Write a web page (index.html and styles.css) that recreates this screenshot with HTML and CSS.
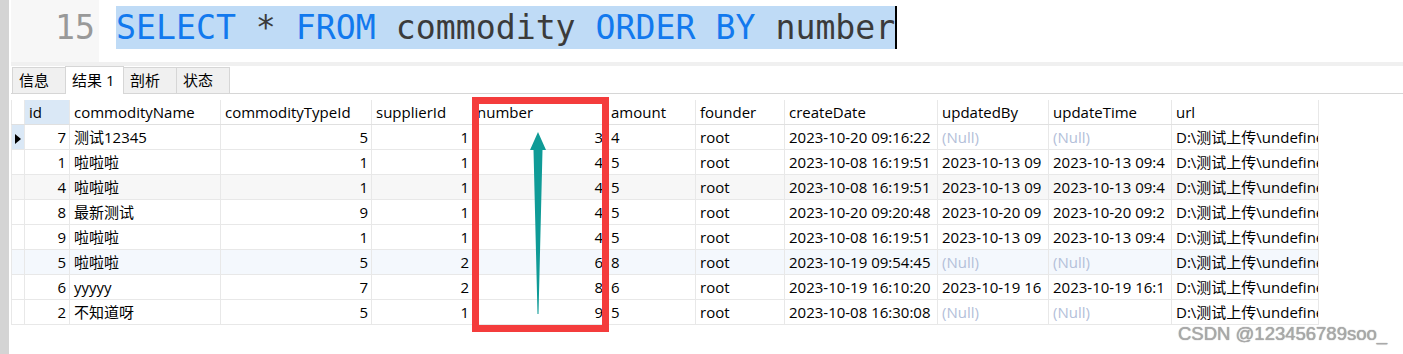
FILE: index.html
```html
<!DOCTYPE html>
<html lang="zh-CN">
<head>
    <meta charset="UTF-8">
    <title>commodity</title>
    <link rel="stylesheet" href="styles.css">
</head>
<body>
    <div class="rail"></div>
    <div class="main">
        <!-- SQL editor -->
        <div class="editor">
            <div class="gutter">15</div>
            <div class="code"><span class="line"><span class="kw">SELECT</span> * <span class="kw">FROM</span> commodity <span class="kw">ORDER BY</span> number</span></div>
        </div>
        <div class="sep"></div>

        <div class="tabs">
            <div class="tab">信息</div>
            <div class="tab active">结果 1</div>
            <div class="tab">剖析</div>
            <div class="tab">状态</div>
        </div>

        <table class="grid">
            <colgroup>
                <col style="width:13px"><col style="width:45px"><col style="width:151px"><col style="width:151px">
                <col style="width:101px"><col style="width:134px"><col style="width:89px"><col style="width:89px">
                <col style="width:153px"><col style="width:111px"><col style="width:123px"><col style="width:147px">
            </colgroup>
            <thead>
                <tr>
                    <th class="ind"></th>
                    <th class="sorted">id</th>
                    <th>commodityName</th>
                    <th>commodityTypeId</th>
                    <th>supplierId</th>
                    <th>number</th>
                    <th>amount</th>
                    <th>founder</th>
                    <th>createDate</th>
                    <th>updatedBy</th>
                    <th>updateTime</th>
                    <th>url</th>
                </tr>
            </thead>
            <tbody id="rows"></tbody>
        </table>

        <div class="watermark">CSDN @123456789soo_</div>
    </div>

    <!-- annotation drawn over the grid -->
    <div class="mark-box"></div>
    <svg class="mark-arrow" width="30" height="190" viewBox="0 0 30 190">
        <polygon points="15,0 23,18 19.5,18 15.5,182 14.5,182 10.5,18 7,18" fill="#0f9b97"/>
    </svg>

    <script>
        // only the part of each value that fits in its column is shown by the grid
        const data = [
            [7, '测试12345', 5, 1, 3, 4, 'root', '2023-10-20 09:16:22', null, null, ''],
            [1, '啦啦啦', 1, 1, 4, 5, 'root', '2023-10-08 16:19:51', '2023-10-13 09', '2023-10-13 09:4', ''],
            [4, '啦啦啦', 1, 1, 4, 5, 'root', '2023-10-08 16:19:51', '2023-10-13 09', '2023-10-13 09:4', 'grey'],
            [8, '最新测试', 9, 1, 4, 5, 'root', '2023-10-20 09:20:48', '2023-10-20 09', '2023-10-20 09:2', ''],
            [9, '啦啦啦', 1, 1, 4, 5, 'root', '2023-10-08 16:19:51', '2023-10-13 09', '2023-10-13 09:4', ''],
            [5, '啦啦啦', 5, 2, 6, 8, 'root', '2023-10-19 09:54:45', null, null, 'blue'],
            [6, 'yyyyy', 7, 2, 8, 6, 'root', '2023-10-19 16:10:20', '2023-10-19 16', '2023-10-19 16:1', ''],
            [2, '不知道呀', 5, 1, 9, 5, 'root', '2023-10-08 16:30:08', null, null, '']
        ];

        const tbody = document.getElementById('rows');
        data.forEach(function (r, i) {
            const tr = document.createElement('tr');
            if (r[10]) tr.classList.add(r[10]);
            const cell = function (v, cls) {
                if (v === null) return '<td class="null">(Null)</td>';
                return '<td' + (cls ? ' class="' + cls + '"' : '') + '>' + v + '</td>';
            };
            tr.innerHTML =
                '<td class="ind' + (i === 0 ? ' current' : '') + '">' + (i === 0 ? '<span class="caret"></span>' : '') + '</td>' +
                cell(r[0], 'num') + cell(r[1]) + cell(r[2], 'num') + cell(r[3], 'num') +
                cell(r[4], 'num') + cell(r[5]) + cell(r[6]) + cell(r[7]) +
                cell(r[8]) + cell(r[9]) + cell('D:\\测试上传\\undefine');
            tbody.appendChild(tr);
        });
    </script>
</body>
</html>
```

FILE: styles.css
```css
body {
    margin: 0;
    width: 1403px;
    height: 354px;
    overflow: hidden;
    background: #fff;
    display: flex;
    font-family: "Open Sans", "Noto Sans CJK SC", sans-serif;
    font-size: 15px;
    color: #000;
}

.rail {
    width: 9px;
    background: #d4d4d4;
    flex: none;
}

.main {
    flex: 1;
    padding-left: 2px;
    position: relative;
}

/* editor */
.editor {
    display: flex;
    height: 62px;
}

.gutter {
    width: 84px;
    padding-right: 4px;
    background: #f7f7f7;
    text-align: right;
    font-family: "DejaVu Sans Mono", monospace;
    font-size: 33.2px;
    line-height: 43px;
    padding-top: 6px;
    color: #999;
}

.code {
    padding-left: 17px;
    padding-top: 6px;
    font-family: "DejaVu Sans Mono", monospace;
    font-size: 33.2px;
    color: #3b3b3b;
}

.line {
    display: inline-block;
    height: 43px;
    line-height: 43px;
    background: #bfdbf6;
    border-right: 2px solid #000;
    white-space: pre;
}

.kw {
    color: #1279ee;
}

.sep {
    height: 4px;
    background: #f0f0f0;
}

/* result tabs */
.tabs {
    display: flex;
    align-items: flex-end;
    height: 27px;
    border-bottom: 1px solid #d6d6d6;
    padding-left: 1px;
}

.tab {
    height: 25px;
    line-height: 25px;
    padding: 0 6px;
    width: 40px;
    background: #f0f0f0;
    border: 1px solid #d6d6d6;
    border-bottom: none;
    margin-right: -1px;
}

.tab.active {
    height: 27px;
    line-height: 27px;
    background: #fff;
    width: 45px;
    position: relative;
    bottom: -1px;
}

/* data grid */
.grid {
    margin-top: 6px;
    border-collapse: collapse;
    table-layout: fixed;
    width: 1307px;
}

.grid th,
.grid td {
    height: 24px;
    padding: 0 3px 0 4px;
    border: 1px solid #e8e8e8;
    white-space: nowrap;
    overflow: hidden;
    font-weight: normal;
    text-align: left;
    line-height: 24px;
}

.grid th {
    border-top: none;
    border-bottom-color: #e0e0e0;
}

.grid th.sorted {
    background: #dae8f6;
}

.grid .ind {
    padding: 0;
}

.grid td.current {
    background: #dae8f6;
}

.caret {
    display: inline-block;
    width: 0;
    height: 0;
    border-top: 5px solid transparent;
    border-bottom: 5px solid transparent;
    border-left: 6px solid #000;
    margin-left: 3px;
    vertical-align: middle;
}

.grid td.num {
    text-align: right;
}

.grid td.null {
    color: #b3c0d9;
}

.grid tr.grey td {
    background: #f7f7f7;
}

.grid tr.blue td {
    background: #f4f8fd;
}

.watermark {
    position: absolute;
    left: 1169px;
    top: 323px;
    font-family: "Liberation Sans", Arial, sans-serif;
    font-size: 18.5px;
    color: #a9a9a9;
    text-shadow: 0 0 1px #888;
}

/* annotation */
.mark-box {
    position: absolute;
    left: 472px;
    top: 97px;
    width: 137px;
    height: 235px;
    box-sizing: border-box;
    border: 7px solid #f43c3c;
}

.mark-arrow {
    position: absolute;
    left: 523px;
    top: 132px;
}
```
